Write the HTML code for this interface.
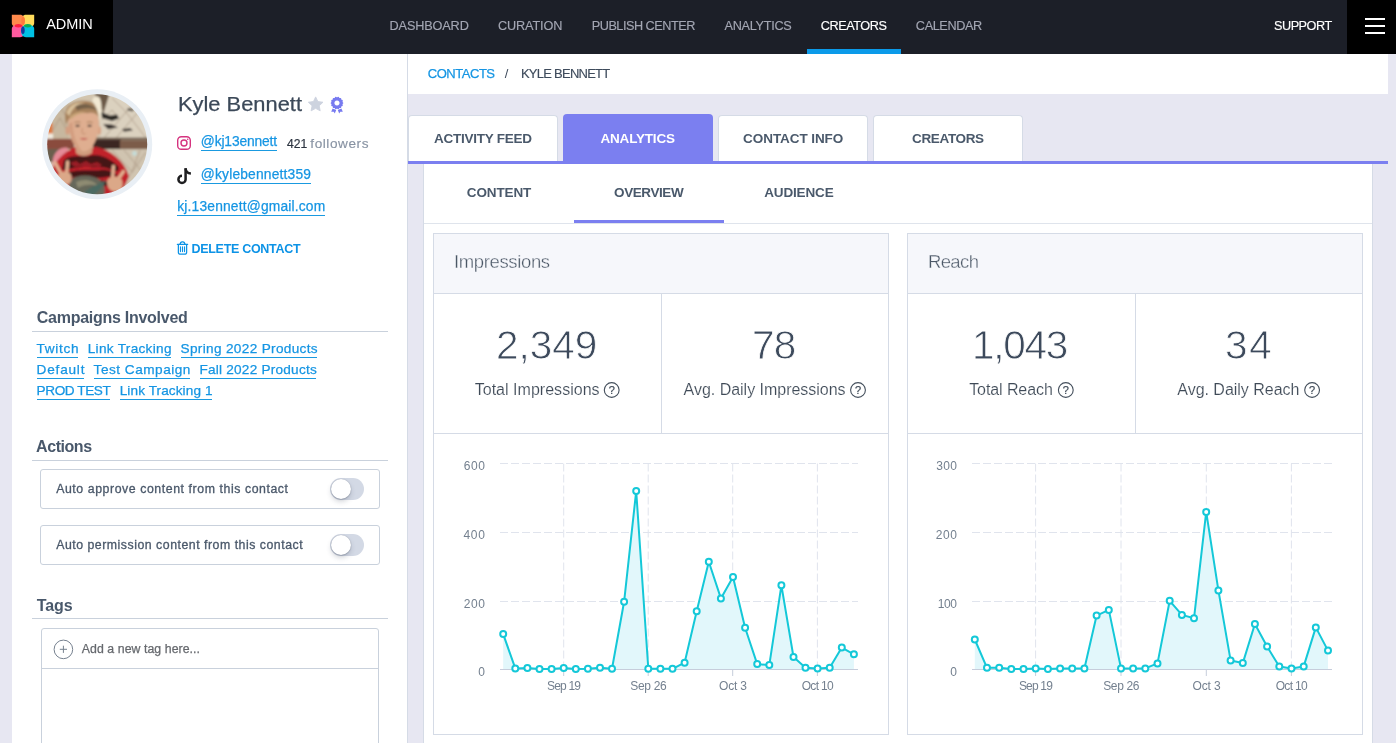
<!DOCTYPE html>
<html><head><meta charset="utf-8"><title>Kyle Bennett</title>
<style>
html,body{margin:0;padding:0;}
body{width:1396px;height:743px;overflow:hidden;position:relative;background:#e7e7f2;font-family:'Liberation Sans', sans-serif;}
.b{position:absolute;}
.t{position:absolute;white-space:pre;line-height:1;font-family:'Liberation Sans', sans-serif;}
.ov{position:absolute;left:0;top:0;will-change:transform;}
.tl{position:absolute;left:0;top:0;width:1396px;height:743px;will-change:transform;}
.ax{font-family:'Liberation Sans', sans-serif;font-size:12px;fill:#74808f;}
</style></head><body>
<div class="b" style="left:0px;top:0px;width:1396px;height:743px;background:#e7e7f2;"></div>
<div class="b" style="left:0px;top:0px;width:1396px;height:54px;background:#1c1f28;"></div>
<div class="b" style="left:0px;top:0px;width:113px;height:54px;background:#000;"></div>
<div class="b" style="left:1347px;top:0px;width:49px;height:54px;background:#000;"></div>
<div class="b" style="left:807px;top:49px;width:94px;height:5px;background:#0b9ae9;"></div>
<div class="b" style="left:1365px;top:18px;width:20px;height:2px;background:#fff;"></div>
<div class="b" style="left:1365px;top:25px;width:20px;height:2px;background:#fff;"></div>
<div class="b" style="left:1365px;top:32px;width:20px;height:2px;background:#fff;"></div>
<div class="b" style="left:12px;top:54px;width:395px;height:689px;background:#fff;"></div>
<div class="b" style="left:407px;top:54px;width:1px;height:689px;background:#d5dbe6;"></div>
<div class="b" style="left:408px;top:54px;width:980px;height:40px;background:#fff;"></div>
<div class="b" style="left:408px;top:114.5px;width:150px;height:46.5px;background:#fff;border:1px solid #d5dbe6;border-bottom:none;border-radius:4px 4px 0 0;box-sizing:border-box;"></div>
<div class="b" style="left:718px;top:114.5px;width:150px;height:46.5px;background:#fff;border:1px solid #d5dbe6;border-bottom:none;border-radius:4px 4px 0 0;box-sizing:border-box;"></div>
<div class="b" style="left:873px;top:114.5px;width:150px;height:46.5px;background:#fff;border:1px solid #d5dbe6;border-bottom:none;border-radius:4px 4px 0 0;box-sizing:border-box;"></div>
<div class="b" style="left:563px;top:113.8px;width:150px;height:47.2px;background:#7b7ff0;border-radius:4px 4px 0 0;"></div>
<div class="b" style="left:408px;top:161px;width:980px;height:3px;background:#7b7ff0;"></div>
<div class="b" style="left:423px;top:164px;width:950px;height:579px;background:#fff;border-left:1px solid #d5dbe6;border-right:1px solid #d5dbe6;box-sizing:border-box;"></div>
<div class="b" style="left:424px;top:223px;width:948px;height:1px;background:#dfe4ec;"></div>
<div class="b" style="left:574px;top:220px;width:150px;height:3px;background:#7b7ff0;"></div>
<div class="b" style="left:433px;top:233px;width:456px;height:502px;background:#fff;border:1px solid #d5dbe6;box-sizing:border-box;"></div>
<div class="b" style="left:434px;top:234px;width:454px;height:59px;background:#f6f7fb;"></div>
<div class="b" style="left:434px;top:293px;width:454px;height:1px;background:#d5dbe6;"></div>
<div class="b" style="left:434px;top:433px;width:454px;height:1px;background:#d5dbe6;"></div>
<div class="b" style="left:661px;top:294px;width:1px;height:139px;background:#d5dbe6;"></div>
<div class="b" style="left:907px;top:233px;width:456px;height:502px;background:#fff;border:1px solid #d5dbe6;box-sizing:border-box;"></div>
<div class="b" style="left:908px;top:234px;width:454px;height:59px;background:#f6f7fb;"></div>
<div class="b" style="left:908px;top:293px;width:454px;height:1px;background:#d5dbe6;"></div>
<div class="b" style="left:908px;top:433px;width:454px;height:1px;background:#d5dbe6;"></div>
<div class="b" style="left:1135px;top:294px;width:1px;height:139px;background:#d5dbe6;"></div>
<div class="b" style="left:32px;top:331px;width:356px;height:1px;background:#c9d1dc;"></div>
<div class="b" style="left:32px;top:460px;width:356px;height:1px;background:#c9d1dc;"></div>
<div class="b" style="left:32px;top:618px;width:356px;height:1px;background:#c9d1dc;"></div>
<div class="b" style="left:40px;top:469px;width:340px;height:40px;border:1px solid #c9d1dc;border-radius:3px;box-sizing:border-box;background:#fff;"></div>
<div class="b" style="left:330px;top:478px;width:34px;height:22px;background:#d3d9e5;border-radius:11px;"></div>
<div class="b" style="left:330.5px;top:478.5px;width:20.5px;height:20.5px;background:#fff;border-radius:50%;box-shadow:0 3px 5px rgba(60,70,90,.22), 0 1px 1px rgba(60,70,90,.18), 0 0 1px rgba(60,70,90,.45);"></div>
<div class="b" style="left:40px;top:525px;width:340px;height:40px;border:1px solid #c9d1dc;border-radius:3px;box-sizing:border-box;background:#fff;"></div>
<div class="b" style="left:330px;top:534px;width:34px;height:22px;background:#d3d9e5;border-radius:11px;"></div>
<div class="b" style="left:330.5px;top:534.5px;width:20.5px;height:20.5px;background:#fff;border-radius:50%;box-shadow:0 3px 5px rgba(60,70,90,.22), 0 1px 1px rgba(60,70,90,.18), 0 0 1px rgba(60,70,90,.45);"></div>
<div class="b" style="left:41px;top:628px;width:338px;height:130px;border:1px solid #c9d1dc;border-radius:3px;box-sizing:border-box;background:#fff;"></div>
<div class="b" style="left:42px;top:668px;width:336px;height:1px;background:#c9d1dc;"></div>
<div class="b" style="left:201px;top:150px;width:76px;height:1px;background:#1a9ae0;"></div>
<div class="b" style="left:201px;top:183px;width:110px;height:1px;background:#1a9ae0;"></div>
<div class="b" style="left:177px;top:215px;width:148px;height:1px;background:#1a9ae0;"></div>
<div class="b" style="left:37px;top:357px;width:41px;height:1px;background:#1a9ae0;"></div>
<div class="b" style="left:88px;top:357px;width:83px;height:1px;background:#1a9ae0;"></div>
<div class="b" style="left:181px;top:357px;width:136px;height:1px;background:#1a9ae0;"></div>
<div class="b" style="left:37px;top:378px;width:47px;height:1px;background:#1a9ae0;"></div>
<div class="b" style="left:94px;top:378px;width:96px;height:1px;background:#1a9ae0;"></div>
<div class="b" style="left:200px;top:378px;width:116px;height:1px;background:#1a9ae0;"></div>
<div class="b" style="left:37px;top:399px;width:73px;height:1px;background:#1a9ae0;"></div>
<div class="b" style="left:120px;top:399px;width:92px;height:1px;background:#1a9ae0;"></div>
<svg class="ov" width="1396" height="743" viewBox="0 0 1396 743">
<!-- logo -->
<g>
<path d="M34.2,14.8 H26 C23,14.8 21.2,17 21.2,20.5 C21.2,24.5 23.5,27.4 27.5,27.4 C31,27.4 34.2,26 34.2,23 Z" fill="#ffdc5c"/>
<path d="M11.8,14.8 H20 C23,14.8 24.8,17 24.8,20.5 C24.8,24.5 22.5,27.4 18.5,27.4 C15,27.4 11.8,26 11.8,23 Z" fill="#ff8a4c"/>
<path d="M11.8,37.2 H20 C23,37.2 24.8,35 24.8,31.5 C24.8,27.5 22.5,24.4 18.5,24.4 C15,24.4 11.8,26 11.8,29 Z" fill="#ff5a9f"/>
<path d="M34.2,37.2 H26 C23,37.2 21.2,35 21.2,31.5 C21.2,27.5 23.5,24.4 27.5,24.4 C31,24.4 34.2,26 34.2,29 Z" fill="#00c1e3"/>
<ellipse cx="23.1" cy="21" rx="1.75" ry="4" fill="#ff7a3c"/>
<ellipse cx="18.4" cy="25.8" rx="3.7" ry="1.7" fill="#ff1f3d"/>
<ellipse cx="27.7" cy="25.8" rx="3.7" ry="1.7" fill="#0cae55"/>
<ellipse cx="22.9" cy="30.3" rx="1.8" ry="3.8" fill="#123a9c"/>
</g>
<!-- star -->
<path d="M315.65,96.90 L317.85,101.57 L322.97,102.22 L319.22,105.76 L320.18,110.83 L315.65,108.35 L311.12,110.83 L312.08,105.76 L308.33,102.22 L313.45,101.57 Z" fill="#cdd3df" stroke="#cdd3df" stroke-width="0.9" stroke-linejoin="round"/>
<!-- badge -->
<g fill="#777af0">
<path fill-rule="evenodd" d="M337,97.3 a5.7,5.7 0 1 0 0.01,0 Z M337,100.4 a2.6,2.6 0 1 1 -0.01,0 Z"/>
<circle cx="342.45" cy="103.00" r="0.85"/><circle cx="341.91" cy="105.36" r="0.85"/><circle cx="340.40" cy="107.26" r="0.85"/><circle cx="338.21" cy="108.31" r="0.85"/><circle cx="335.79" cy="108.31" r="0.85"/><circle cx="333.60" cy="107.26" r="0.85"/><circle cx="332.09" cy="105.36" r="0.85"/><circle cx="331.55" cy="103.00" r="0.85"/><circle cx="332.09" cy="100.64" r="0.85"/><circle cx="333.60" cy="98.74" r="0.85"/><circle cx="335.79" cy="97.69" r="0.85"/><circle cx="338.21" cy="97.69" r="0.85"/><circle cx="340.40" cy="98.74" r="0.85"/><circle cx="341.91" cy="100.64" r="0.85"/>
<path d="M332.6,108.6 L336.2,110.1 L334.8,113.4 L333.7,111.7 L331.2,111.8 Z"/>
<path d="M341.4,108.6 L337.8,110.1 L339.2,113.4 L340.3,111.7 L342.8,111.8 Z"/>
</g>
<!-- instagram -->
<g fill="none" stroke="#d5337f" stroke-width="1.4">
<rect x="177.7" y="136.7" width="12.6" height="12.6" rx="3.6"/>
<circle cx="184" cy="143" r="3.0"/>
</g>
<circle cx="187.7" cy="139.3" r="0.8" fill="#d5337f"/>
<!-- tiktok -->
<g fill="none" stroke="#1e1e20" stroke-width="2.5">
<path d="M185.6,168.2 V179.4 a3.6,3.6 0 1 1 -3.6,-3.6"/>
<path d="M185.6,168.4 c0.2,3 2.2,5 5.3,5.2"/>
</g>
<!-- trash -->
<g fill="none" stroke="#0d93e6" stroke-width="1.3" stroke-linecap="round">
<path d="M177.4,244.4 H187.6"/>
<path d="M180.1,244.2 c0.2,-1.6 0.9,-2.4 2.0,-2.4 h0.8 c1.1,0 1.8,0.8 2.0,2.4"/>
<path d="M178.4,244.6 V252.4 a1.8,1.8 0 0 0 1.8,1.8 h4.6 a1.8,1.8 0 0 0 1.8,-1.8 V244.6"/>
<path d="M180.5,246.7 V251.6 M182.5,246.7 V251.6 M184.5,246.7 V251.6" stroke-width="1.1"/>
</g>
<!-- plus circle -->
<g fill="none" stroke="#76818f" stroke-width="1">
<circle cx="63.4" cy="649.4" r="9.3"/>
<path d="M59.8,649.3 H67 M63.4,645.7 V652.9"/>
</g>
<!-- help circles -->
<g fill="none" stroke="#444f5c" stroke-width="1.1">
<circle cx="611.7" cy="390" r="7.4"/>
<circle cx="858" cy="390" r="7.4"/>
<circle cx="1065.8" cy="390" r="7.4"/>
<circle cx="1312.1" cy="390" r="7.4"/>
</g>
<g font-family="'Liberation Sans', sans-serif" font-size="11" fill="#3f4a57" stroke="#3f4a57" stroke-width="0.2" text-anchor="middle">
<text x="611.7" y="394">?</text>
<text x="858" y="394">?</text>
<text x="1065.8" y="394">?</text>
<text x="1312.1" y="394">?</text>
</g>

<defs>
<clipPath id="avc"><circle cx="97.2" cy="144.2" r="50"/></clipPath>
<filter id="avb" x="-10%" y="-10%" width="120%" height="120%"><feGaussianBlur stdDeviation="0.85"/></filter>
</defs>
<circle cx="97.2" cy="144.2" r="55" fill="#e9eff5"/>
<g clip-path="url(#avc)">
<g filter="url(#avb)">
<rect x="40" y="88" width="114" height="112" fill="#d2c5af"/>
<rect x="100" y="90" width="52" height="50" fill="#dbd1bf"/>
<rect x="44" y="100" width="25" height="40" fill="#c7b79f"/>
<!-- chain link upper right -->
<g stroke="#a08c78" stroke-width="0.9" fill="none" opacity=".75">
<path d="M104,138 L126,112 L146,138 M116,138 L138,112 L150,126 M126,112 L112,98 M138,112 L150,100 M126,112 L140,98 M102,120 L112,110 L120,120"/>
<path d="M48,138 L60,118 L68,132 M48,118 L58,104 L66,116"/>
</g>
<!-- dark marks -->
<path d="M101,112 l9,3.5 l7,-1 l2,4 l-7,2.5 l-10,-3 z" fill="#2d2927"/>
<path d="M103,124 l9,0.5 l6,3 l-10,1.8 z" fill="#38322f"/>
<path d="M122,129 l8,-1 l3,2.5 l-9,1.2 z" fill="#4a433e"/>
<path d="M128,108 l6,1 l-1,2.5 l-6,-1 z" fill="#5a524a"/>
<!-- dark triangle -->
<path d="M93.8,92 H110 L103.4,113.4 Z" fill="#6b5846"/>
<!-- orange item + white -->
<rect x="46" y="123" width="6.5" height="11" fill="#df7a42"/>
<rect x="46" y="133.5" width="7" height="5.5" fill="#f1ece0"/>
<!-- bar -->
<rect x="44" y="138.8" width="30" height="10.2" fill="#8a4c3c"/>
<rect x="93" y="138.6" width="28" height="10.6" fill="#3a2824"/>
<rect x="120" y="140.2" width="32" height="9" fill="#7b5b49"/>
<rect x="93" y="137.6" width="60" height="2.2" fill="#6d5a4b"/>
<!-- below bar -->
<rect x="44" y="149" width="16" height="13" fill="#6a5f4e"/>
<rect x="108" y="149.4" width="44" height="44" fill="#d0c4b0"/>
<g stroke="#a58f7c" stroke-width="0.9" fill="none" opacity=".8">
<path d="M112,150 L132,172 L146,152 M124,150 L144,174 L150,166 M132,172 L120,188 M144,174 L132,190 M132,172 L140,150"/>
</g>
<circle cx="134.5" cy="153.5" r="2.4" fill="#c4dcd8"/>
<!-- pink shoulder -->
<path d="M52.5,165 C52,153 59,147 67.5,147.5 L69,160 L57,168 Z" fill="#e48b97"/>
<!-- shirt -->
<path d="M50,178 C53,161 63,153 75,147 C80,153 89,153.5 94.5,146.5 C111,150 124,160 129,176.5 L120,196 L68,198 L52,188 Z" fill="#c1232b"/>
<!-- black pattern on shirt -->
<g fill="#2a1114" opacity=".82">
<path d="M64,160 C72,154 80,157 88,156 C98,153 108,157 118,166 C120,170 118,173 112,170 C104,166 96,168 88,167 C78,166 70,170 62,170 Z"/>
<path d="M66,173 C76,169 90,171 100,170 C108,169 114,172 118,176 C110,176 104,178 96,178 C86,178 76,176 66,179 Z"/>
<path d="M92,181 C100,179 108,181 112,185 L104,186 Z"/>
</g>
<g fill="#c1232b" opacity=".7">
<path d="M70,163 l6,-2 l4,3 l6,-3 l5,3 l6,-2 l5,3 l-3,2 l-6,-1 l-6,2 l-6,-2 l-6,1 z"/>
</g>
<!-- dino graphic -->
<path d="M70,180 C78,174 92,174 100,180 C104,183 106,188 104,196 L72,198 C68,192 68,186 70,180 Z" fill="#66675a"/>
<path d="M76,182 C84,178 94,180 98,186 C92,184 84,184 78,188 Z" fill="#8e8b72"/>
<path d="M84,192 C92,186 100,184 106,180 C104,186 98,192 92,196 Z" fill="#4b6a62"/>
<!-- neck -->
<path d="M75,144 H93 L92,153 C87,157 80,157 76,153 Z" fill="#cf9c7e"/>
<!-- ears -->
<ellipse cx="67.6" cy="130.5" rx="2.2" ry="4.2" fill="#d39e80"/>
<ellipse cx="99.2" cy="130.5" rx="2" ry="4.2" fill="#d8a384"/>
<!-- face -->
<path d="M68.3,123 C68,113 75,109 84,109 C93,109 99.6,113 99,124 C98.6,137 93,151 84,151.4 C75,151 68.6,137 68.3,123 Z" fill="#dfae90"/>
<path d="M68.6,124 C69,136 74,148 82,151 C76,144 73,134 72.5,122 Z" fill="#cf9a7c" opacity=".8"/>
<!-- eyes / brows / nose / mouth -->
<ellipse cx="77.6" cy="125.8" rx="2.3" ry="1.1" fill="#4f4038"/>
<ellipse cx="89.6" cy="125.8" rx="2.3" ry="1.1" fill="#4f4038"/>
<path d="M74.5,122.6 q3,-1.4 6,-0.2 M86.8,122.4 q3,-1.2 6,0.2" stroke="#a07a58" stroke-width="1" fill="none"/>
<path d="M82.5,128 q-1.4,4 0.2,5.6 q1.6,0.8 3,0" stroke="#c48e70" stroke-width="1" fill="none"/>
<path d="M79.6,138.8 q4.2,-1.6 8.4,0 q-4.2,2 -8.4,0 Z" fill="#c0504e"/>
<!-- hair -->
<path d="M66.2,125 C62.5,110 68,101.5 82,100.8 C94,100.4 101.6,106 100.4,120 C98.6,114 93,111.6 87.5,113.2 C80,111 72.5,113.6 69.8,118 C68.2,120 67,122.4 66.2,125 Z" fill="#a8835d"/>
<path d="M66.5,113 C69,104 77,101.5 85,102.8 C78,104 72,108 69.4,116 Z" fill="#d9c19b"/>
<path d="M75,106.4 C82,102.4 93,103 98,111 C92,107.4 84,107.6 77.4,110.6 Z" fill="#75604a"/>
<path d="M70,117 C74,112.4 80,111.4 86,113 C80,113.4 74.5,115 71,119.6 Z" fill="#c9a678"/>
<!-- feather -->
<path d="M92.4,101.4 C92.4,95.6 98.4,94.4 100.2,99 C102.4,106 101.8,115 99.8,121.4 C98.6,112.6 96.4,106.4 92.4,101.4 Z" fill="#f2e9d3"/>
<!-- left hand (viewer's left) -->
<path d="M55,162.5 L61.5,174.5 M67.6,162 L66.6,174" stroke="#e2b393" stroke-width="3.3" stroke-linecap="round" fill="none"/>
<path d="M58,176 C58,171 70,170 71.5,176 C72.4,181 70,184.6 65.6,184.6 C61,184.6 58,181 58,176 Z" fill="#dba888"/>
<!-- right hand -->
<path d="M113.4,166.4 L112.6,178 M123.4,171.6 L117.4,180" stroke="#e2b393" stroke-width="3.3" stroke-linecap="round" fill="none"/>
<path d="M107,182 C107,176 119,175 122,180 C124,186 121.6,191.6 115.6,191.6 C110,191.6 107,187 107,182 Z" fill="#dba888"/>
</g>
</g>

<line x1="500" y1="463.5" x2="858" y2="463.5" stroke="#e0e4ed" stroke-width="1" stroke-dasharray="8 3"/>
<line x1="500" y1="532.5" x2="858" y2="532.5" stroke="#e0e4ed" stroke-width="1" stroke-dasharray="8 3"/>
<line x1="500" y1="601.5" x2="858" y2="601.5" stroke="#e0e4ed" stroke-width="1" stroke-dasharray="8 3"/>
<line x1="563.7" y1="463.5" x2="563.7" y2="669.5" stroke="#e0e4ed" stroke-width="1" stroke-dasharray="8 3"/>
<line x1="563.7" y1="669.5" x2="563.7" y2="676" stroke="#c6cddb" stroke-width="1"/>
<line x1="648.2" y1="463.5" x2="648.2" y2="669.5" stroke="#e0e4ed" stroke-width="1" stroke-dasharray="8 3"/>
<line x1="648.2" y1="669.5" x2="648.2" y2="676" stroke="#c6cddb" stroke-width="1"/>
<line x1="732.7" y1="463.5" x2="732.7" y2="669.5" stroke="#e0e4ed" stroke-width="1" stroke-dasharray="8 3"/>
<line x1="732.7" y1="669.5" x2="732.7" y2="676" stroke="#c6cddb" stroke-width="1"/>
<line x1="817.4" y1="463.5" x2="817.4" y2="669.5" stroke="#e0e4ed" stroke-width="1" stroke-dasharray="8 3"/>
<line x1="817.4" y1="669.5" x2="817.4" y2="676" stroke="#c6cddb" stroke-width="1"/>
<polygon points="503.2,669.5 503.2,634.1 515.3,668.4 527.4,668.1 539.5,669.1 551.6,669.1 563.7,668.1 575.8,669.1 587.9,668.8 600.0,667.8 612.0,668.8 624.1,601.8 636.2,491.1 648.3,668.8 660.4,668.8 672.5,668.8 684.6,662.7 696.7,611.2 708.8,561.7 720.9,598.4 733.0,576.9 745.1,627.7 757.2,664.1 769.3,665.1 781.4,585.3 793.5,657.0 805.5,667.8 817.6,668.4 829.7,667.8 841.8,647.6 853.9,654.3 853.9,669.5" fill="#e2f7fb"/>
<line x1="500" y1="669.5" x2="858" y2="669.5" stroke="#c6cddb" stroke-width="1"/>
<polyline points="503.2,634.1 515.3,668.4 527.4,668.1 539.5,669.1 551.6,669.1 563.7,668.1 575.8,669.1 587.9,668.8 600.0,667.8 612.0,668.8 624.1,601.8 636.2,491.1 648.3,668.8 660.4,668.8 672.5,668.8 684.6,662.7 696.7,611.2 708.8,561.7 720.9,598.4 733.0,576.9 745.1,627.7 757.2,664.1 769.3,665.1 781.4,585.3 793.5,657.0 805.5,667.8 817.6,668.4 829.7,667.8 841.8,647.6 853.9,654.3" fill="none" stroke="#14c8d8" stroke-width="2" stroke-linejoin="round"/>
<circle cx="503.2" cy="634.1" r="3" fill="#fff" stroke="#14c8d8" stroke-width="2"/>
<circle cx="515.3" cy="668.4" r="3" fill="#fff" stroke="#14c8d8" stroke-width="2"/>
<circle cx="527.4" cy="668.1" r="3" fill="#fff" stroke="#14c8d8" stroke-width="2"/>
<circle cx="539.5" cy="669.1" r="3" fill="#fff" stroke="#14c8d8" stroke-width="2"/>
<circle cx="551.6" cy="669.1" r="3" fill="#fff" stroke="#14c8d8" stroke-width="2"/>
<circle cx="563.7" cy="668.1" r="3" fill="#fff" stroke="#14c8d8" stroke-width="2"/>
<circle cx="575.8" cy="669.1" r="3" fill="#fff" stroke="#14c8d8" stroke-width="2"/>
<circle cx="587.9" cy="668.8" r="3" fill="#fff" stroke="#14c8d8" stroke-width="2"/>
<circle cx="600.0" cy="667.8" r="3" fill="#fff" stroke="#14c8d8" stroke-width="2"/>
<circle cx="612.0" cy="668.8" r="3" fill="#fff" stroke="#14c8d8" stroke-width="2"/>
<circle cx="624.1" cy="601.8" r="3" fill="#fff" stroke="#14c8d8" stroke-width="2"/>
<circle cx="636.2" cy="491.1" r="3" fill="#fff" stroke="#14c8d8" stroke-width="2"/>
<circle cx="648.3" cy="668.8" r="3" fill="#fff" stroke="#14c8d8" stroke-width="2"/>
<circle cx="660.4" cy="668.8" r="3" fill="#fff" stroke="#14c8d8" stroke-width="2"/>
<circle cx="672.5" cy="668.8" r="3" fill="#fff" stroke="#14c8d8" stroke-width="2"/>
<circle cx="684.6" cy="662.7" r="3" fill="#fff" stroke="#14c8d8" stroke-width="2"/>
<circle cx="696.7" cy="611.2" r="3" fill="#fff" stroke="#14c8d8" stroke-width="2"/>
<circle cx="708.8" cy="561.7" r="3" fill="#fff" stroke="#14c8d8" stroke-width="2"/>
<circle cx="720.9" cy="598.4" r="3" fill="#fff" stroke="#14c8d8" stroke-width="2"/>
<circle cx="733.0" cy="576.9" r="3" fill="#fff" stroke="#14c8d8" stroke-width="2"/>
<circle cx="745.1" cy="627.7" r="3" fill="#fff" stroke="#14c8d8" stroke-width="2"/>
<circle cx="757.2" cy="664.1" r="3" fill="#fff" stroke="#14c8d8" stroke-width="2"/>
<circle cx="769.3" cy="665.1" r="3" fill="#fff" stroke="#14c8d8" stroke-width="2"/>
<circle cx="781.4" cy="585.3" r="3" fill="#fff" stroke="#14c8d8" stroke-width="2"/>
<circle cx="793.5" cy="657.0" r="3" fill="#fff" stroke="#14c8d8" stroke-width="2"/>
<circle cx="805.5" cy="667.8" r="3" fill="#fff" stroke="#14c8d8" stroke-width="2"/>
<circle cx="817.6" cy="668.4" r="3" fill="#fff" stroke="#14c8d8" stroke-width="2"/>
<circle cx="829.7" cy="667.8" r="3" fill="#fff" stroke="#14c8d8" stroke-width="2"/>
<circle cx="841.8" cy="647.6" r="3" fill="#fff" stroke="#14c8d8" stroke-width="2"/>
<circle cx="853.9" cy="654.3" r="3" fill="#fff" stroke="#14c8d8" stroke-width="2"/>
<text x="485" y="469.5" text-anchor="end" class="ax" textLength="21.3" lengthAdjust="spacing">600</text>
<text x="485" y="538.5" text-anchor="end" class="ax" textLength="21.6" lengthAdjust="spacing">400</text>
<text x="485" y="607.5" text-anchor="end" class="ax" textLength="21.3" lengthAdjust="spacing">200</text>
<text x="485" y="675.5" text-anchor="end" class="ax" textLength="6.8" lengthAdjust="spacing">0</text>
<text x="564.0" y="689.5" text-anchor="middle" class="ax" textLength="33.9" lengthAdjust="spacing">Sep 19</text>
<text x="648.5" y="689.5" text-anchor="middle" class="ax" textLength="36.3" lengthAdjust="spacing">Sep 26</text>
<text x="733.0" y="689.5" text-anchor="middle" class="ax" textLength="28.1" lengthAdjust="spacing">Oct 3</text>
<text x="817.7" y="689.5" text-anchor="middle" class="ax" textLength="32.1" lengthAdjust="spacing">Oct 10</text>
<line x1="972" y1="463.5" x2="1332" y2="463.5" stroke="#e0e4ed" stroke-width="1" stroke-dasharray="8 3"/>
<line x1="972" y1="532.5" x2="1332" y2="532.5" stroke="#e0e4ed" stroke-width="1" stroke-dasharray="8 3"/>
<line x1="972" y1="601.5" x2="1332" y2="601.5" stroke="#e0e4ed" stroke-width="1" stroke-dasharray="8 3"/>
<line x1="1035.6" y1="463.5" x2="1035.6" y2="669.5" stroke="#e0e4ed" stroke-width="1" stroke-dasharray="8 3"/>
<line x1="1035.6" y1="669.5" x2="1035.6" y2="676" stroke="#c6cddb" stroke-width="1"/>
<line x1="1121.0" y1="463.5" x2="1121.0" y2="669.5" stroke="#e0e4ed" stroke-width="1" stroke-dasharray="8 3"/>
<line x1="1121.0" y1="669.5" x2="1121.0" y2="676" stroke="#c6cddb" stroke-width="1"/>
<line x1="1206.3" y1="463.5" x2="1206.3" y2="669.5" stroke="#e0e4ed" stroke-width="1" stroke-dasharray="8 3"/>
<line x1="1206.3" y1="669.5" x2="1206.3" y2="676" stroke="#c6cddb" stroke-width="1"/>
<line x1="1291.4" y1="463.5" x2="1291.4" y2="669.5" stroke="#e0e4ed" stroke-width="1" stroke-dasharray="8 3"/>
<line x1="1291.4" y1="669.5" x2="1291.4" y2="676" stroke="#c6cddb" stroke-width="1"/>
<polygon points="974.8,669.5 974.8,639.5 987.0,667.8 999.2,667.8 1011.3,669.1 1023.5,669.1 1035.7,668.4 1047.9,669.1 1060.1,668.4 1072.2,668.4 1084.4,668.4 1096.6,615.6 1108.8,609.9 1121.0,668.4 1133.1,668.4 1145.3,668.4 1157.5,663.4 1169.7,600.8 1181.9,614.9 1194.0,618.3 1206.2,511.9 1218.4,590.4 1230.6,660.4 1242.8,663.1 1254.9,624.0 1267.1,646.6 1279.3,666.4 1291.5,668.4 1303.7,666.4 1315.8,627.4 1328.0,650.6 1328.0,669.5" fill="#e2f7fb"/>
<line x1="972" y1="669.5" x2="1332" y2="669.5" stroke="#c6cddb" stroke-width="1"/>
<polyline points="974.8,639.5 987.0,667.8 999.2,667.8 1011.3,669.1 1023.5,669.1 1035.7,668.4 1047.9,669.1 1060.1,668.4 1072.2,668.4 1084.4,668.4 1096.6,615.6 1108.8,609.9 1121.0,668.4 1133.1,668.4 1145.3,668.4 1157.5,663.4 1169.7,600.8 1181.9,614.9 1194.0,618.3 1206.2,511.9 1218.4,590.4 1230.6,660.4 1242.8,663.1 1254.9,624.0 1267.1,646.6 1279.3,666.4 1291.5,668.4 1303.7,666.4 1315.8,627.4 1328.0,650.6" fill="none" stroke="#14c8d8" stroke-width="2" stroke-linejoin="round"/>
<circle cx="974.8" cy="639.5" r="3" fill="#fff" stroke="#14c8d8" stroke-width="2"/>
<circle cx="987.0" cy="667.8" r="3" fill="#fff" stroke="#14c8d8" stroke-width="2"/>
<circle cx="999.2" cy="667.8" r="3" fill="#fff" stroke="#14c8d8" stroke-width="2"/>
<circle cx="1011.3" cy="669.1" r="3" fill="#fff" stroke="#14c8d8" stroke-width="2"/>
<circle cx="1023.5" cy="669.1" r="3" fill="#fff" stroke="#14c8d8" stroke-width="2"/>
<circle cx="1035.7" cy="668.4" r="3" fill="#fff" stroke="#14c8d8" stroke-width="2"/>
<circle cx="1047.9" cy="669.1" r="3" fill="#fff" stroke="#14c8d8" stroke-width="2"/>
<circle cx="1060.1" cy="668.4" r="3" fill="#fff" stroke="#14c8d8" stroke-width="2"/>
<circle cx="1072.2" cy="668.4" r="3" fill="#fff" stroke="#14c8d8" stroke-width="2"/>
<circle cx="1084.4" cy="668.4" r="3" fill="#fff" stroke="#14c8d8" stroke-width="2"/>
<circle cx="1096.6" cy="615.6" r="3" fill="#fff" stroke="#14c8d8" stroke-width="2"/>
<circle cx="1108.8" cy="609.9" r="3" fill="#fff" stroke="#14c8d8" stroke-width="2"/>
<circle cx="1121.0" cy="668.4" r="3" fill="#fff" stroke="#14c8d8" stroke-width="2"/>
<circle cx="1133.1" cy="668.4" r="3" fill="#fff" stroke="#14c8d8" stroke-width="2"/>
<circle cx="1145.3" cy="668.4" r="3" fill="#fff" stroke="#14c8d8" stroke-width="2"/>
<circle cx="1157.5" cy="663.4" r="3" fill="#fff" stroke="#14c8d8" stroke-width="2"/>
<circle cx="1169.7" cy="600.8" r="3" fill="#fff" stroke="#14c8d8" stroke-width="2"/>
<circle cx="1181.9" cy="614.9" r="3" fill="#fff" stroke="#14c8d8" stroke-width="2"/>
<circle cx="1194.0" cy="618.3" r="3" fill="#fff" stroke="#14c8d8" stroke-width="2"/>
<circle cx="1206.2" cy="511.9" r="3" fill="#fff" stroke="#14c8d8" stroke-width="2"/>
<circle cx="1218.4" cy="590.4" r="3" fill="#fff" stroke="#14c8d8" stroke-width="2"/>
<circle cx="1230.6" cy="660.4" r="3" fill="#fff" stroke="#14c8d8" stroke-width="2"/>
<circle cx="1242.8" cy="663.1" r="3" fill="#fff" stroke="#14c8d8" stroke-width="2"/>
<circle cx="1254.9" cy="624.0" r="3" fill="#fff" stroke="#14c8d8" stroke-width="2"/>
<circle cx="1267.1" cy="646.6" r="3" fill="#fff" stroke="#14c8d8" stroke-width="2"/>
<circle cx="1279.3" cy="666.4" r="3" fill="#fff" stroke="#14c8d8" stroke-width="2"/>
<circle cx="1291.5" cy="668.4" r="3" fill="#fff" stroke="#14c8d8" stroke-width="2"/>
<circle cx="1303.7" cy="666.4" r="3" fill="#fff" stroke="#14c8d8" stroke-width="2"/>
<circle cx="1315.8" cy="627.4" r="3" fill="#fff" stroke="#14c8d8" stroke-width="2"/>
<circle cx="1328.0" cy="650.6" r="3" fill="#fff" stroke="#14c8d8" stroke-width="2"/>
<text x="957" y="469.5" text-anchor="end" class="ax" textLength="20.8" lengthAdjust="spacing">300</text>
<text x="957" y="538.5" text-anchor="end" class="ax" textLength="21.3" lengthAdjust="spacing">200</text>
<text x="957" y="607.5" text-anchor="end" class="ax" textLength="19.2" lengthAdjust="spacing">100</text>
<text x="957" y="675.5" text-anchor="end" class="ax" textLength="6.8" lengthAdjust="spacing">0</text>
<text x="1035.9" y="689.5" text-anchor="middle" class="ax" textLength="33.9" lengthAdjust="spacing">Sep 19</text>
<text x="1121.3" y="689.5" text-anchor="middle" class="ax" textLength="36.3" lengthAdjust="spacing">Sep 26</text>
<text x="1206.6" y="689.5" text-anchor="middle" class="ax" textLength="28.1" lengthAdjust="spacing">Oct 3</text>
<text x="1291.7" y="689.5" text-anchor="middle" class="ax" textLength="32.1" lengthAdjust="spacing">Oct 10</text>
</svg>
<div class="tl">
<span class="t" style="left:46.27px;top:17.00px;font-size:14.5px;font-weight:400;color:#ffffff;letter-spacing:-0.071px;">ADMIN</span>
<span class="t" style="left:389.56px;top:20.00px;font-size:12.7px;font-weight:400;color:#a3a6b3;letter-spacing:-0.138px;-webkit-text-stroke-width:0.15px;">DASHBOARD</span>
<span class="t" style="left:497.97px;top:20.00px;font-size:12.7px;font-weight:400;color:#a3a6b3;letter-spacing:-0.137px;-webkit-text-stroke-width:0.15px;">CURATION</span>
<span class="t" style="left:591.76px;top:20.00px;font-size:12.7px;font-weight:400;color:#a3a6b3;letter-spacing:-0.493px;-webkit-text-stroke-width:0.15px;">PUBLISH CENTER</span>
<span class="t" style="left:724.47px;top:20.00px;font-size:12.7px;font-weight:400;color:#a3a6b3;letter-spacing:-0.289px;-webkit-text-stroke-width:0.15px;">ANALYTICS</span>
<span class="t" style="left:820.87px;top:20.00px;font-size:12.7px;font-weight:400;color:#ffffff;letter-spacing:-0.465px;-webkit-text-stroke-width:0.15px;">CREATORS</span>
<span class="t" style="left:915.87px;top:20.00px;font-size:12.7px;font-weight:400;color:#a3a6b3;letter-spacing:-0.389px;-webkit-text-stroke-width:0.15px;">CALENDAR</span>
<span class="t" style="left:1273.96px;top:20.00px;font-size:12.7px;font-weight:400;color:#ffffff;letter-spacing:-0.473px;-webkit-text-stroke-width:0.15px;">SUPPORT</span>
<span class="t" style="left:427.75px;top:67.00px;font-size:13px;font-weight:400;color:#1595e3;letter-spacing:-0.464px;-webkit-text-stroke-width:0.25px;">CONTACTS</span>
<span class="t" style="left:504.65px;top:67.00px;font-size:13px;font-weight:400;color:#3e4b5c;letter-spacing:0.000px;">/</span>
<span class="t" style="left:520.95px;top:67.00px;font-size:13px;font-weight:400;color:#3e4b5c;letter-spacing:-0.748px;-webkit-text-stroke-width:0.15px;">KYLE BENNETT</span>
<span class="t" style="left:433.93px;top:132.00px;font-size:13.5px;font-weight:700;color:#4a596b;letter-spacing:-0.255px;">ACTIVITY FEED</span>
<span class="t" style="left:600.53px;top:132.00px;font-size:13.5px;font-weight:700;color:#ffffff;letter-spacing:-0.196px;">ANALYTICS</span>
<span class="t" style="left:743.12px;top:132.00px;font-size:13.5px;font-weight:700;color:#4a596b;letter-spacing:-0.077px;">CONTACT INFO</span>
<span class="t" style="left:912.12px;top:132.00px;font-size:13.5px;font-weight:700;color:#4a596b;letter-spacing:-0.367px;">CREATORS</span>
<span class="t" style="left:466.82px;top:186.00px;font-size:13.5px;font-weight:700;color:#4a596b;letter-spacing:-0.117px;">CONTENT</span>
<span class="t" style="left:614.12px;top:186.00px;font-size:13.5px;font-weight:700;color:#4a596b;letter-spacing:-0.426px;">OVERVIEW</span>
<span class="t" style="left:764.23px;top:186.00px;font-size:13.5px;font-weight:700;color:#4a596b;letter-spacing:-0.152px;">AUDIENCE</span>
<span class="t" style="left:177.86px;top:94.00px;font-size:20.8px;font-weight:400;color:#3b4858;transform:scaleX(1.0512);transform-origin:0 0;-webkit-text-stroke:0.25px #3b4858;">Kyle Bennett</span>
<span class="t" style="left:200.81px;top:135.00px;font-size:13.8px;font-weight:400;color:#1595e3;letter-spacing:-0.141px;-webkit-text-stroke-width:0.25px;">@kj13ennett</span>
<span class="t" style="left:286.72px;top:137.00px;font-size:13.6px;font-weight:400;color:#2c3440;transform:scaleX(0.8930);transform-origin:0 0;-webkit-text-stroke-width:0.2px;">421</span>
<span class="t" style="left:310.32px;top:137.00px;font-size:13.6px;font-weight:400;color:#8893a3;letter-spacing:0.565px;-webkit-text-stroke-width:0.15px;">followers</span>
<span class="t" style="left:200.81px;top:168.00px;font-size:13.8px;font-weight:400;color:#1595e3;letter-spacing:0.185px;-webkit-text-stroke-width:0.25px;">@kylebennett359</span>
<span class="t" style="left:177.31px;top:200.00px;font-size:13.8px;font-weight:400;color:#1595e3;letter-spacing:0.174px;-webkit-text-stroke-width:0.25px;">kj.13ennett@gmail.com</span>
<span class="t" style="left:191.47px;top:243.00px;font-size:12.5px;font-weight:700;color:#0d93e6;letter-spacing:-0.294px;">DELETE CONTACT</span>
<span class="t" style="left:36.80px;top:310.00px;font-size:16px;font-weight:700;color:#49586b;letter-spacing:-0.270px;">Campaigns Involved</span>
<span class="t" style="left:36.62px;top:342.00px;font-size:13.6px;font-weight:400;color:#1595e3;letter-spacing:0.666px;-webkit-text-stroke-width:0.25px;">Twitch</span>
<span class="t" style="left:87.72px;top:342.00px;font-size:13.6px;font-weight:400;color:#1595e3;letter-spacing:0.306px;-webkit-text-stroke-width:0.25px;">Link Tracking</span>
<span class="t" style="left:180.52px;top:342.00px;font-size:13.6px;font-weight:400;color:#1595e3;letter-spacing:0.338px;-webkit-text-stroke-width:0.25px;">Spring 2022 Products</span>
<span class="t" style="left:36.62px;top:363.00px;font-size:13.6px;font-weight:400;color:#1595e3;letter-spacing:0.797px;-webkit-text-stroke-width:0.25px;">Default</span>
<span class="t" style="left:93.62px;top:363.00px;font-size:13.6px;font-weight:400;color:#1595e3;letter-spacing:0.507px;-webkit-text-stroke-width:0.25px;">Test Campaign</span>
<span class="t" style="left:199.42px;top:363.00px;font-size:13.6px;font-weight:400;color:#1595e3;letter-spacing:0.236px;-webkit-text-stroke-width:0.25px;">Fall 2022 Products</span>
<span class="t" style="left:36.62px;top:384.00px;font-size:13.6px;font-weight:400;color:#1595e3;letter-spacing:-0.423px;-webkit-text-stroke-width:0.25px;">PROD TEST</span>
<span class="t" style="left:119.72px;top:384.00px;font-size:13.6px;font-weight:400;color:#1595e3;letter-spacing:0.094px;-webkit-text-stroke-width:0.25px;">Link Tracking 1</span>
<span class="t" style="left:36.10px;top:439.00px;font-size:16px;font-weight:700;color:#49586b;letter-spacing:-0.445px;">Actions</span>
<span class="t" style="left:56.18px;top:483.00px;font-size:12.3px;font-weight:400;color:#4a586a;letter-spacing:0.576px;-webkit-text-stroke-width:0.3px;">Auto approve content from this contact</span>
<span class="t" style="left:56.18px;top:539.00px;font-size:12.3px;font-weight:400;color:#4a586a;letter-spacing:0.522px;-webkit-text-stroke-width:0.3px;">Auto permission content from this contact</span>
<span class="t" style="left:36.70px;top:598.00px;font-size:16px;font-weight:700;color:#49586b;letter-spacing:-0.052px;">Tags</span>
<span class="t" style="left:81.79px;top:643.00px;font-size:12.3px;font-weight:400;color:#66696e;letter-spacing:0.066px;-webkit-text-stroke-width:0.25px;">Add a new tag here...</span>
<span class="t" style="left:453.88px;top:253.00px;font-size:18.5px;font-weight:400;color:#4b5766;letter-spacing:-0.348px;-webkit-text-stroke:0.35px #f6f7fb;">Impressions</span>
<span class="t" style="left:927.88px;top:253.00px;font-size:18.5px;font-weight:400;color:#4b5766;letter-spacing:-0.609px;-webkit-text-stroke:0.35px #f6f7fb;">Reach</span>
<span class="t" style="left:495.88px;top:325.00px;font-size:40.5px;font-weight:400;color:#3d4a5c;letter-spacing:-0.005px;-webkit-text-stroke:0.8px #fff;">2,349</span>
<span class="t" style="left:751.98px;top:325.00px;font-size:40.5px;font-weight:400;color:#3d4a5c;letter-spacing:-0.625px;-webkit-text-stroke:0.8px #fff;">78</span>
<span class="t" style="left:971.98px;top:325.00px;font-size:40.5px;font-weight:400;color:#3d4a5c;letter-spacing:-1.255px;-webkit-text-stroke:0.8px #fff;">1,043</span>
<span class="t" style="left:1224.97px;top:325.00px;font-size:40.5px;font-weight:400;color:#3d4a5c;letter-spacing:1.775px;-webkit-text-stroke:0.8px #fff;">34</span>
<span class="t" style="left:474.70px;top:382.00px;font-size:16px;font-weight:400;color:#3f4a57;letter-spacing:0.025px;-webkit-text-stroke:0.15px #fff;">Total Impressions</span>
<span class="t" style="left:683.60px;top:382.00px;font-size:16px;font-weight:400;color:#3f4a57;letter-spacing:-0.021px;-webkit-text-stroke:0.15px #fff;">Avg. Daily Impressions</span>
<span class="t" style="left:969.20px;top:382.00px;font-size:16px;font-weight:400;color:#3f4a57;letter-spacing:-0.090px;-webkit-text-stroke:0.15px #fff;">Total Reach</span>
<span class="t" style="left:1177.30px;top:382.00px;font-size:16px;font-weight:400;color:#3f4a57;letter-spacing:-0.023px;-webkit-text-stroke:0.15px #fff;">Avg. Daily Reach</span>
</div>
</body></html>
